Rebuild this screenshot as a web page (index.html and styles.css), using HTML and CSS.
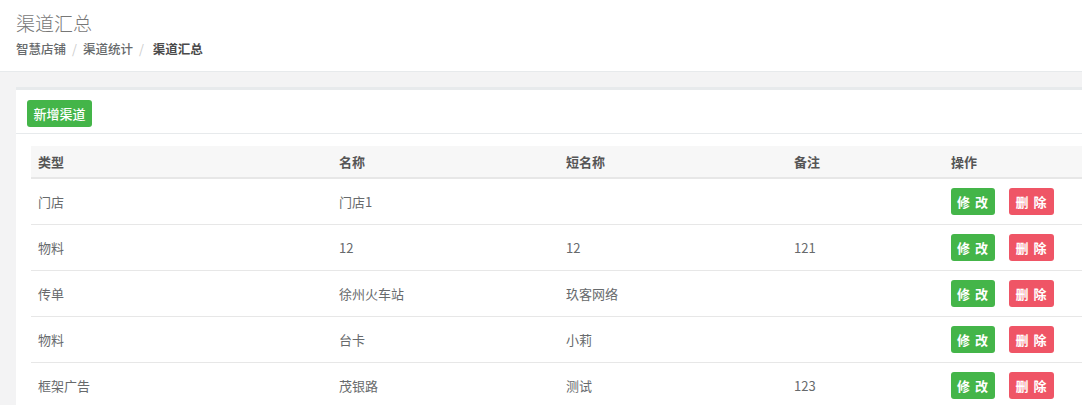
FILE: index.html
```html
<!DOCTYPE html>
<html lang="zh-CN">
<head>
  <meta charset="UTF-8" />
  <title>渠道汇总</title>
  <link rel="stylesheet" href="styles.css">
</head>
<body>
  <div class="page-heading">
    <h2>渠道汇总</h2>
    <ol class="breadcrumb">
      <li>智慧店铺</li>
      <li>渠道统计</li>
      <li class="active">渠道汇总</li>
    </ol>
  </div>

  <div class="wrapper">
    <div class="ibox">
      <div class="ibox-title">
        <button class="btn btn-add">新增渠道</button>
      </div>
      <div class="ibox-content">
        <table class="table">
          <colgroup>
            <col class="c1"><col class="c2"><col class="c3"><col class="c4"><col class="c5">
          </colgroup>
          <thead>
            <tr><th>类型</th><th>名称</th><th>短名称</th><th>备注</th><th>操作</th></tr>
          </thead>
          <tbody>
            <tr>
              <td>门店</td><td>门店1</td><td></td><td></td>
              <td><button class="btn btn-edit">修 改</button><button class="btn btn-del">删 除</button></td>
            </tr>
            <tr>
              <td>物料</td><td>12</td><td>12</td><td>121</td>
              <td><button class="btn btn-edit">修 改</button><button class="btn btn-del">删 除</button></td>
            </tr>
            <tr>
              <td>传单</td><td>徐州火车站</td><td>玖客网络</td><td></td>
              <td><button class="btn btn-edit">修 改</button><button class="btn btn-del">删 除</button></td>
            </tr>
            <tr>
              <td>物料</td><td>台卡</td><td>小莉</td><td></td>
              <td><button class="btn btn-edit">修 改</button><button class="btn btn-del">删 除</button></td>
            </tr>
            <tr>
              <td>框架广告</td><td>茂银路</td><td>测试</td><td>123</td>
              <td><button class="btn btn-edit">修 改</button><button class="btn btn-del">删 除</button></td>
            </tr>
          </tbody>
        </table>
      </div>
    </div>
  </div>
</body>
</html>
```

FILE: styles.css
```css
html, body {
  margin: 0;
  padding: 0;
  overflow: hidden;
}
body {
  font-family: "Noto Sans CJK SC", "Liberation Sans", sans-serif;
  font-size: 13px;
  color: #676a6c;
  background: #f3f3f4;
}
.page-heading {
  background: #fff;
  border-bottom: 1px solid #e7eaec;
  height: 72px;
  padding: 0 16px;
  box-sizing: border-box;
}
.page-heading h2 {
  margin: 0;
  padding-top: 11px;
  font-size: 19px;
  line-height: 24px;
  font-weight: 300;
  color: #777;
}
.breadcrumb {
  list-style: none;
  margin: 6px 0 0;
  padding: 0;
  display: flex;
  font-size: 12.5px;
  line-height: 16px;
  font-weight: 500;
  color: #676a6c;
}
.breadcrumb li + li::before {
  content: "/";
  color: #ccc;
  font-weight: 400;
  padding: 0 6px;
}
.breadcrumb li.active {
  color: #4a4a4a;
  font-weight: 600;
}
.breadcrumb li.active::before {
  padding-right: 9px;
}
.wrapper {
  padding: 15px 0 0 16px;
}
.ibox {
  background: #fff;
  border-top: 3px solid #e7eaec;
  width: 1100px;
}
.ibox-title {
  padding: 10px 11px 6px;
  border-bottom: 1px solid #e7eaec;
  height: 27px;
}
.ibox-content {
  padding: 12px 15px;
}
.btn {
  border: none;
  border-radius: 3px;
  color: #fff;
  font-family: inherit;
  font-size: 13px;
  cursor: pointer;
  height: 27px;
  padding: 0;
  line-height: 27px;
}
.btn-add {
  background: #44b549;
  width: 65px;
  font-weight: 500;
}
.table {
  border-collapse: collapse;
  table-layout: fixed;
  width: 1070px;
}
.c1 { width: 301px; }
.c2 { width: 227px; }
.c3 { width: 228px; }
.c4 { width: 157px; }
.table th {
  background: #f7f7f7;
  text-align: left;
  font-weight: 600;
  color: #555;
  height: 31px;
  padding: 0 7px;
  border-bottom: 2px solid #e7e7e7;
  line-height: 16px;
}
.table td {
  padding: 0 7px;
  height: 45px;
  border-bottom: 1px solid #e7e7e7;
  line-height: 16px;
}
.btn-edit, .btn-del {
  font-weight: 700;
  letter-spacing: 1px;
  width: 44px;
}
.btn-edit {
  background: #44b549;
}
.btn-del {
  background: #ef5566;
  margin-left: 14px;
  width: 45px;
}
```
